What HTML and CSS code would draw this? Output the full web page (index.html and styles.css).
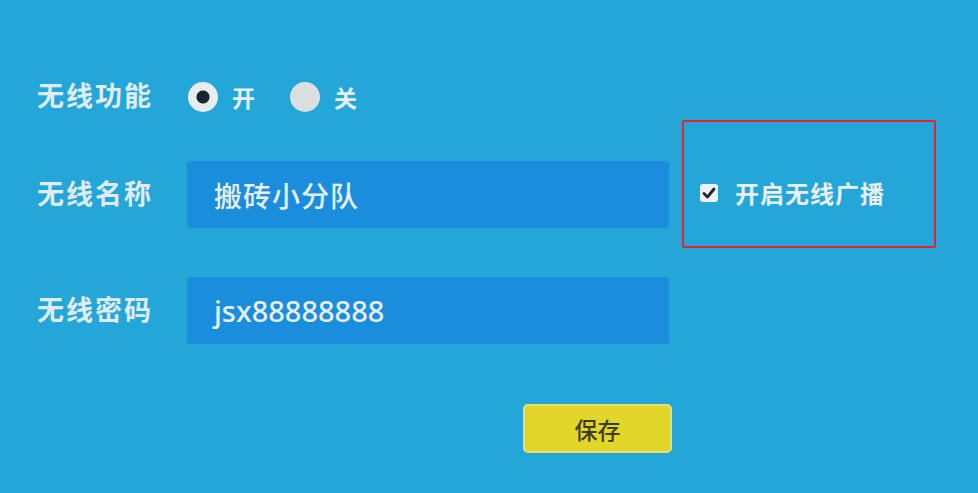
FILE: index.html
```html
<!DOCTYPE html>
<html lang="zh-CN">
<head>
    <meta charset="UTF-8">
    <title>无线设置</title>
    <link rel="stylesheet" href="styles.css">
</head>
<body>
    <div class="page">
        <form class="wifi-form">
            <div class="label">无线功能</div>
            <div class="switch">
                <span class="radio checked"></span><span class="opt">开</span>
                <span class="radio"></span><span class="opt">关</span>
            </div>
            <div></div>

            <div class="label">无线名称</div>
            <div class="field name">搬砖小分队</div>
            <div class="broadcast">
                <span class="checkbox">
                    <svg width="14" height="14" viewBox="0 0 14 14"><path d="M2 7.5 L5.5 11 L12 3" fill="none" stroke="#1d2530" stroke-width="2.8" stroke-linecap="round" stroke-linejoin="round"/></svg>
                </span>
                <span>开启无线广播</span>
            </div>

            <div class="label">无线密码</div>
            <div class="field pass">jsx88888888</div>
            <div></div>

            <div></div>
            <div class="actions"><button type="button" class="save">保存</button></div>
            <div></div>
        </form>
        <div class="mark"></div>
    </div>
</body>
</html>
```

FILE: styles.css
```css
body {
    margin: 0;
    background: #24a6d9;
    font-family: "Noto Sans CJK SC", sans-serif;
    color: #e8f1f7;
}

.page {
    position: relative;
    width: 978px;
    height: 493px;
    overflow: hidden;
}

.wifi-form {
    display: grid;
    grid-template-columns: 137px 482px 240px;
    grid-template-rows: 30px 67px 67px 49px;
    column-gap: 13px;
    row-gap: 49px;
    align-items: center;
    padding: 82px 0 0 37px;
}

.wifi-form > :nth-child(10),
.wifi-form > :nth-child(11) {
    margin-top: 22px;
}

.label {
    font-size: 27px;
    font-weight: bold;
    letter-spacing: 2px;
    line-height: 1;
    margin-top: -5px;
    opacity: 0.95;
}

.switch {
    display: flex;
    align-items: center;
    height: 30px;
    margin-left: 1px;
}

.radio {
    box-sizing: border-box;
    width: 30px;
    height: 30px;
    border-radius: 50%;
    background: #dcdfe2;
}

.radio.checked {
    background: #e9ecef radial-gradient(circle, #1c2330 0 6px, transparent 7px);
}

.opt {
    font-size: 23px;
    font-weight: bold;
    margin: 0 35px 0 14px;
}

.field {
    height: 67px;
    display: flex;
    align-items: center;
    padding-left: 27px;
    background: #1a8ddc;
    border-radius: 4px;
    color: #e9eff8;
    font-weight: 500;
}

.field.name {
    font-size: 28px;
    letter-spacing: 1px;
}

.field.pass {
    font-family: "Noto Sans", "Noto Sans CJK SC", sans-serif;
    font-size: 29px;
}

.broadcast {
    display: flex;
    align-items: center;
    padding-left: 18px;
    margin-top: -4px;
    font-size: 24px;
    font-weight: bold;
    letter-spacing: 1px;
}

.checkbox {
    width: 18px;
    height: 18px;
    border-radius: 3px;
    background: #eef1f4;
    display: flex;
    align-items: center;
    justify-content: center;
    margin-right: 17px;
}

.actions {
    display: flex;
    justify-content: flex-end;
    margin-right: -3px;
}

.save {
    width: 149px;
    height: 49px;
    border: 2px solid #ece26a;
    border-radius: 5px;
    background: #e3d62b;
    color: #3f3e1c;
    font-family: "Noto Sans CJK SC", sans-serif;
    font-size: 23px;
    font-weight: 500;
}

/* red outline drawn over the broadcast option */
.mark {
    position: absolute;
    left: 682px;
    top: 120px;
    width: 250px;
    height: 124px;
    border: 2px solid #e5252a;
    border-radius: 2px;
}
```
